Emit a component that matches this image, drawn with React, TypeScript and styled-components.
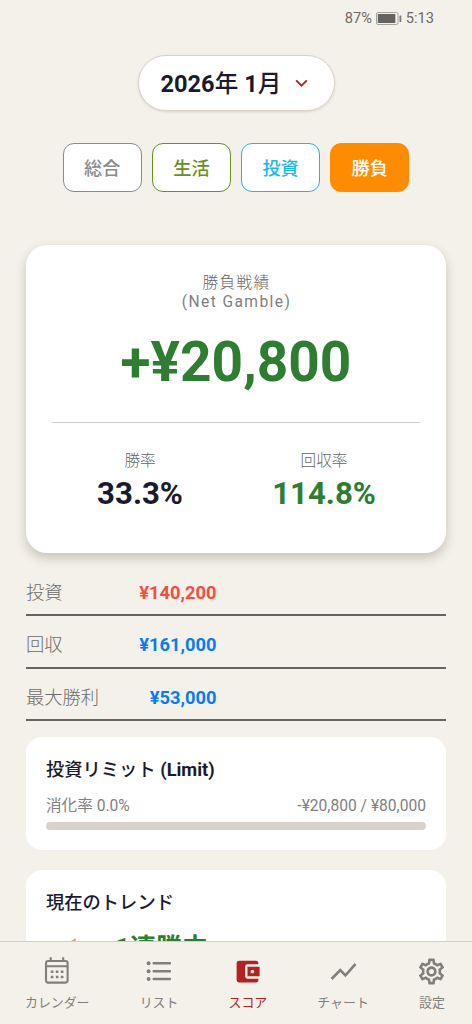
import React from 'react';
import styled, { createGlobalStyle } from 'styled-components';
import { MdAccountBalanceWallet, MdOutlineSettings, MdShowChart } from 'react-icons/md';

const color = {
  page: '#f4f1ea',
  card: '#ffffff',
  ink: '#1a1a2e',
  muted: '#808080',
  green: '#2e7d32',
  red: '#b22222',
  rule: '#d9d2cc',
};

const GlobalStyle = createGlobalStyle`
  * { box-sizing: border-box; }
  body {
    margin: 0;
    background: ${color.page};
    font-family: Roboto, "Noto Sans CJK JP", sans-serif;
    color: ${color.ink};
  }
`;

const Screen = styled.div`
  display: flex;
  flex-direction: column;
  height: 1024px;
  overflow: hidden;
  background: ${color.page};
`;

const StatusBar = styled.div`
  display: flex;
  flex: none;
  align-items: center;
  justify-content: flex-end;
  gap: 4px;
  height: 36px;
  padding-right: 38px;
  font-size: 14.6px;
  line-height: 18px;
  color: #6b6a65;
`;

const Scroll = styled.main`
  display: flex;
  flex: 1;
  min-height: 0;
  flex-direction: column;
  padding: 19px 26px 0;
  overflow: hidden;
`;

const MonthButton = styled.button`
  display: flex;
  flex: none;
  align-self: center;
  align-items: center;
  justify-content: space-between;
  width: 197px;
  height: 56px;
  padding: 1px 26px 0 22px;
  border: 1.5px solid ${color.rule};
  border-radius: 28px;
  background: ${color.card};
  box-shadow: 0 1px 3px rgba(0, 0, 0, 0.12);
  font: 500 23.6px/30px Roboto, "Noto Sans CJK JP", sans-serif;
  color: ${color.ink};
`;

const Latin = styled.span`
  font-weight: 700;
`;

const Tabs = styled.div`
  display: flex;
  flex: none;
  justify-content: center;
  gap: 10.2px;
  margin-top: 32px;
`;

const Tab = styled.button<{ $tone: string; $active?: boolean }>`
  width: 79px;
  height: 49px;
  padding: 2px 0 0;
  border: 1.4px solid ${(p) => p.$tone};
  border-radius: 11px;
  background: ${(p) => (p.$active ? p.$tone : color.card)};
  color: ${(p) => (p.$active ? color.card : p.$tone)};
  font: 500 18.2px/24px Roboto, "Noto Sans CJK JP", sans-serif;
`;

const ScoreCard = styled.section`
  display: flex;
  flex: none;
  flex-direction: column;
  height: 307.5px;
  margin-top: 53px;
  padding: 29px 26px 0;
  border-radius: 21px;
  background: ${color.card};
  box-shadow: 0 5px 11px rgba(60, 50, 30, 0.24);
`;

const ScoreLabel = styled.div`
  padding-left: 1px;
  font-size: 15.6px;
  line-height: 19px;
  letter-spacing: 1.4px;
  text-align: center;
  color: ${color.muted};
`;

const JapaneseScoreLabel = styled(ScoreLabel)`
  font-weight: 300;
  color: #666666;
`;

const ScoreValue = styled.div`
  margin-top: 17px;
  font-size: 55px;
  font-weight: 700;
  line-height: 66px;
  text-align: center;
  color: ${color.green};
`;

const Stats = styled.div`
  display: flex;
  gap: 8px;
  margin-top: 27px;
  padding: 28px 8px 0 0;
  border-top: 1px solid #d1ccc7;
`;

const Stat = styled.div`
  flex: 1;
  text-align: center;
`;

const StatLabel = styled.div`
  font-size: 15.6px;
  font-weight: 300;
  line-height: 20px;
  color: #666666;
`;

const StatValue = styled.div<{ $tone: string }>`
  margin-top: 4px;
  font-size: 31.2px;
  font-weight: 700;
  line-height: 38px;
  color: ${(p) => p.$tone};
`;

const Ledger = styled.dl`
  flex: none;
  margin: 11px 0 0;
`;

const LedgerRow = styled.div`
  display: flex;
  align-items: center;
  height: 52.5px;
  border-bottom: 2px solid #66635f;
  padding-top: 8px;
  line-height: 24px;
`;

const LedgerLabel = styled.dt`
  width: 84px;
  font-size: 18.3px;
  font-weight: 300;
  white-space: nowrap;
  color: #6c6b68;
`;

const LedgerValue = styled.dd<{ $tone: string }>`
  width: 106.5px;
  margin: 0;
  font-size: 18.3px;
  font-weight: 700;
  text-align: right;
  color: ${(p) => p.$tone};
`;

const InfoCard = styled.section<{ $gap: number }>`
  flex: none;
  height: 113px;
  margin-top: ${(p) => p.$gap}px;
  padding: 21px 20px 0;
  border-radius: 16px;
  background: ${color.card};
`;

const InfoTitle = styled.h2`
  margin: 0;
  font-size: 18.3px;
  font-weight: 500;
  line-height: 24px;
`;

const LimitLine = styled.div`
  display: flex;
  justify-content: space-between;
  margin-top: 14px;
  font-size: 15.6px;
  line-height: 20px;
  color: ${color.muted};
`;

const Track = styled.div`
  height: 8px;
  margin-top: 6px;
  border-radius: 4px;
  background: ${color.rule};
`;

const Trend = styled.div`
  display: flex;
  align-items: flex-start;
  gap: 24px;
  margin-top: 14px;
  padding-left: 15px;
  font-size: 26px;
  font-weight: 700;
  line-height: 38px;
  color: ${color.green};
`;

const NavBar = styled.nav`
  display: flex;
  flex: none;
  justify-content: space-between;
  height: 83px;
  padding: 15px 27px 0 25px;
  border-top: 1px solid #d3cfc8;
  background: ${color.page};
`;

const NavItem = styled.a<{ $active?: boolean }>`
  display: flex;
  flex-direction: column;
  align-items: center;
  gap: 9px;
  font-size: 12.9px;
  line-height: 18px;
  color: ${(p) => (p.$active ? color.red : '#807f7b')};
`;

const NavIcon = styled.span`
  display: flex;
  align-items: center;
  justify-content: center;
  width: 26px;
  height: 28px;

  svg {
    flex: none;
  }
`;

const Battery = () => (
  <svg width="26" height="13" viewBox="0 0 26 13">
    <rect x="0.5" y="0.5" width="21.5" height="12" rx="1.5" fill="none" stroke="#a5a39d" />
    <rect x="1.8" y="2" width="17.5" height="9" fill="#65635f" />
    <rect x="23.5" y="3.5" width="1.8" height="6.5" rx="0.6" fill="#7a7872" />
  </svg>
);

const Chevron = () => (
  <svg width="13" height="9" viewBox="0 0 13 9" fill="none" stroke={color.red} strokeWidth="1.9">
    <path d="M1.2 1.4l5.3 5.2 5.3-5.2" />
  </svg>
);

const CalendarIcon = () => (
  <svg width="28" height="28" viewBox="0 0 28 28" fill="none" stroke="currentColor" strokeWidth="2.1">
    <rect x="3" y="4" width="21.6" height="21.6" rx="2" />
    <path d="M3 9.3h21.6M7.7 0.3v3.5M20.2 0.3v3.5" />
    <path d="M7.8 14.8h2.6M12.8 14.8h2.6M17.8 14.8h2.6M7.8 20h2.6M12.8 20h2.6M17.8 20h2.6" strokeWidth="2.6" />
  </svg>
);

const ListIcon = () => (
  <svg width="28" height="28" viewBox="0 0 28 28" stroke="currentColor" strokeWidth="2.4" strokeLinecap="round">
    <path d="M8.7 6.3h16.2M8.7 14.2h16.2M8.7 22h16.2" />
    <g fill="currentColor" stroke="none">
      <circle cx="3.6" cy="6.3" r="2" />
      <circle cx="3.6" cy="14.2" r="2" />
      <circle cx="3.6" cy="22" r="2" />
    </g>
  </svg>
);

const FlexedArm = () => (
  <svg width="30" height="32" viewBox="0 0 30 32" fill="#d9a566">
    <path d="M8 14C10 12 12 10 15 9.5l-.5 3 2 5c5-1 10 2 10 7 0 4-5 7-12 7-6 0-12-3-12-7z" />
  </svg>
);

const tabs = [
  { label: '総合', tone: '#8b8b8b' },
  { label: '生活', tone: '#6b8e23' },
  { label: '投資', tone: '#1fb6ec' },
  { label: '勝負', tone: '#ff8c00', active: true },
];

const ledger = [
  { label: '投資', value: '¥140,200', tone: '#f44d42' },
  { label: '回収', value: '¥161,000', tone: '#0a7bf0' },
  { label: '最大勝利', value: '¥53,000', tone: '#0a7bf0' },
];

const nav = [
  { label: 'カレンダー', icon: <CalendarIcon /> },
  { label: 'リスト', icon: <ListIcon /> },
  { label: 'スコア', icon: <MdAccountBalanceWallet size={29} />, active: true },
  { label: 'チャート', icon: <MdShowChart size={31} /> },
  { label: '設定', icon: <MdOutlineSettings size={31} /> },
];

export default function App() {
  return (
    <Screen lang="ja">
      <GlobalStyle />
      <StatusBar>
        <span>87%</span>
        <Battery />
        <span>5:13</span>
      </StatusBar>
      <Scroll>
        <MonthButton>
          <span>
            <Latin>2026</Latin>年 <Latin>1</Latin>月
          </span>
          <Chevron />
        </MonthButton>
        <Tabs>
          {tabs.map((t) => (
            <Tab key={t.label} $tone={t.tone} $active={t.active}>
              {t.label}
            </Tab>
          ))}
        </Tabs>
        <ScoreCard>
          <JapaneseScoreLabel>勝負戦績</JapaneseScoreLabel>
          <ScoreLabel>(Net Gamble)</ScoreLabel>
          <ScoreValue>+¥20,800</ScoreValue>
          <Stats>
            <Stat>
              <StatLabel>勝率</StatLabel>
              <StatValue $tone={color.ink}>33.3%</StatValue>
            </Stat>
            <Stat>
              <StatLabel>回収率</StatLabel>
              <StatValue $tone={color.green}>114.8%</StatValue>
            </Stat>
          </Stats>
        </ScoreCard>
        <Ledger>
          {ledger.map((row) => (
            <LedgerRow key={row.label}>
              <LedgerLabel>{row.label}</LedgerLabel>
              <LedgerValue $tone={row.tone}>{row.value}</LedgerValue>
            </LedgerRow>
          ))}
        </Ledger>
        <InfoCard $gap={16}>
          <InfoTitle>
            投資リミット <Latin>(Limit)</Latin>
          </InfoTitle>
          <LimitLine>
            <span>消化率 0.0%</span>
            <span>-¥20,800 / ¥80,000</span>
          </LimitLine>
          <Track />
        </InfoCard>
        <InfoCard $gap={19.5}>
          <InfoTitle>現在のトレンド</InfoTitle>
          <Trend>
            <FlexedArm />
            <span>1連勝中</span>
          </Trend>
        </InfoCard>
      </Scroll>
      <NavBar>
        {nav.map((item) => (
          <NavItem key={item.label} $active={item.active}>
            <NavIcon>{item.icon}</NavIcon>
            <span>{item.label}</span>
          </NavItem>
        ))}
      </NavBar>
    </Screen>
  );
}
